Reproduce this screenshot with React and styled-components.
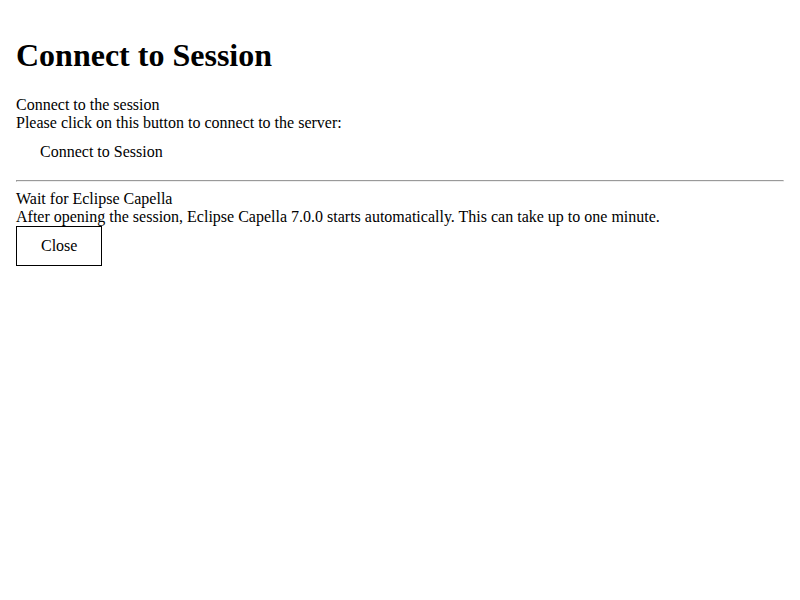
import React from 'react';
import styled, { createGlobalStyle } from 'styled-components';

const GlobalStyle = createGlobalStyle`
  body {
    margin: 0;
    background: #ffffff;
    color: #000000;
    font-family: "Liberation Serif", "Times New Roman", serif;
    font-size: 16px;
  }
`;

const Page = styled.div`
  display: flex;
  flex-direction: column;
  padding: 16px;
`;

const Title = styled.h1`
  font-size: 32px;
  font-weight: bold;
  margin: 21.44px 0;
  line-height: normal;
`;

const Section = styled.div`
  display: flex;
  flex-direction: column;
  align-items: flex-start;
`;

const Line = styled.div`
  line-height: normal;
`;

const Button = styled.button`
  font-family: "Liberation Serif", "Times New Roman", serif;
  font-size: 16px;
  line-height: normal;
  color: #000000;
  background: #ffffff;
  padding: ${(p) => (p.$outlined ? '10px 24px' : '11px 24px')};
  border: ${(p) => (p.$outlined ? '1px solid #000000' : 'none')};
  border-radius: 0;
  cursor: pointer;
`;

const Divider = styled.hr`
  border-style: inset;
  border-width: 1px;
  color: gray;
  margin: 8px 0;
  width: 100%;
  box-sizing: border-box;
`;

const App = () => (
  <>
    <GlobalStyle />
    <Page>
      <Title>Connect to Session</Title>
      <Section>
        <Line>Connect to the session</Line>
        <Line>Please click on this button to connect to the server:</Line>
        <Button>Connect to Session</Button>
      </Section>
      <Divider />
      <Section>
        <Line>Wait for Eclipse Capella</Line>
        <Line>
          After opening the session, Eclipse Capella 7.0.0 starts automatically. This can take up to
          one minute.
        </Line>
        <Button $outlined>Close</Button>
      </Section>
    </Page>
  </>
);

export default App;
